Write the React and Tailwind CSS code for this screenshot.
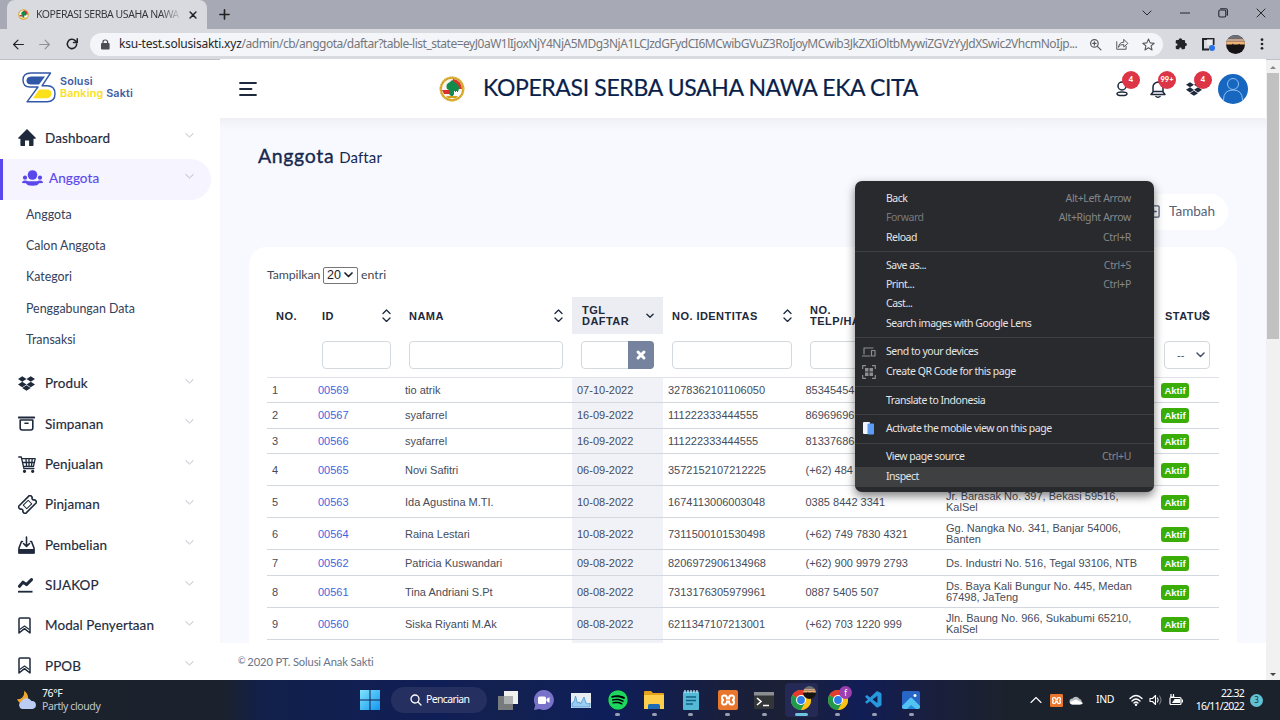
import React from "react";
import { FaDropbox, FaSpotify, FaXmark } from "react-icons/fa6";
import { BiSolidExtension } from "react-icons/bi";
import { VscVscode } from "react-icons/vsc";

const chromeFont = "font-['Noto_Sans','Open_Sans',sans-serif]";
const pageFont = "font-['Lato',sans-serif]";
const dataFont = "font-['Liberation_Sans',sans-serif]";

function Line({ d, className = "", w = 1.5, box = "0 0 24 24", children }) {
  return (
    <svg viewBox={box} className={"shrink-0 " + className} fill="none" stroke="currentColor" strokeWidth={w} strokeLinecap="round" strokeLinejoin="round">
      {d && <path d={d} />}
      {children}
    </svg>
  );
}

function Emblem({ className }) {
  return (
    <svg viewBox="0 0 26 26" className={"shrink-0 " + className}>
      <circle cx="13" cy="13" r="12.4" fill="#d2a21c" />
      <circle cx="13" cy="13" r="11.800" fill="none" stroke="#e9cf7c" strokeWidth="1" strokeDasharray="1.4 1.6" />
      <circle cx="13" cy="13" r="10.2" fill="#f6f4ec" />
      <path d="M14 3a10 10 0 0 1 9 10h-4L13 6z" fill="#d8322b" />
      <path d="M3 14h8v4H5z" fill="#d8322b" />
      <path d="M8 13q-2-5 3-7l2-2 2 2q5 2 5 6l-1 5h-3l-3 4-3-3v-4z" fill="#128a4c" />
      <path d="M15 18v-3h1v1h1v-1h1v1h1v-1h1v1h2v2l-3 2h-4z" fill="#fff" />
      <path d="M7 20h12l-2 2H9z" fill="#d2a21c" />
    </svg>
  );
}

function Sunset({ className }) {
  return (
    <svg viewBox="0 0 20 20" className={"shrink-0 rounded-full " + className}>
      <rect width="20" height="20" fill="#171314" />
      <rect width="20" height="4" fill="#6c7079" />
      <rect y="4" width="20" height="3" fill="#c8a48c" />
      <rect y="7" width="20" height="3" fill="#f0b376" />
      <path d="M6 10l1-1 1 1 4 .3 2-1 1 1z" fill="#171314" />
    </svg>
  );
}

function BrowserTop() {
  return (
    <>
      <div className={"h-[29px] shrink-0 bg-[#a7a9b5] flex items-end text-[#33353b] " + chromeFont}>
        <div className="ml-[7px] w-[200px] h-[29px] rounded-t-lg bg-[#d8dae0] flex items-center pl-[11px] pr-[9px]">
          <Emblem className="size-[11px]" />
          <span className="ml-[7px] w-[146px] overflow-hidden whitespace-nowrap text-[10.500px] tracking-[-0.45px] bg-gradient-to-r from-[#33353b] from-85% to-transparent bg-clip-text text-transparent">KOPERASI SERBA USAHA NAWA EKA CITA</span>
          <Line d="M5 5l14 14M19 5L5 19" w={3.6} className="size-[10px] ml-auto text-[#222]" />
        </div>
        <Line d="M12 2v20M2 12h20" w={3.6} className="size-[11px] ml-[12px] mb-[9px] text-[#222]" />
        <div className="ml-auto flex items-center h-[26px] gap-[28px] mr-[14px] mb-[3px] text-[#26282c]">
          <Line d="M1 3l4 4 4-4" w={1} box="0 0 10 10" className="size-[10px]" />
          <Line d="M0 5h10" w={1.2} box="0 0 10 10" className="size-[10px]" />
          <Line w={1.1} box="0 0 10 10" className="size-[10px]"><rect x=".8" y="2" width="7" height="7" rx="1.4" /><path d="M2.6 .8H8q1.4 0 1.4 1.4v5" /></Line>
          <Line d="M1 1l8 8M9 1l-8 8" w={1} box="0 0 10 10" className="size-[10px]" />
        </div>
      </div>
      <div className={"h-[31px] shrink-0 bg-[#d8dae0] border-b border-[#bfc1c8] flex items-center text-[#222] " + chromeFont}>
        <Line d="M21 12H4M11 4l-8 8 8 8" w={2.2} className="size-[13px] ml-[12px]" />
        <Line d="M3 12h17M13 4l8 8-8 8" w={2} className="size-[13px] ml-[13px] text-[#8e9096]" />
        <Line w={2.6} className="size-[14px] ml-[14px]"><path d="M20 12a8 8 0 1 1-2.4-5.8L20 8.6" /><path d="M21 3v6.4h-6.4" /></Line>
        <div className="ml-[11px] w-[1073px] shrink-0 h-[23px] rounded-full bg-[#f3f5f8] flex items-center pl-[11px] pr-[8px] whitespace-nowrap">
          <svg viewBox="0 0 9 11" className="w-[9px] h-[11px] shrink-0 text-[#4b4d52]"><rect y="4" width="8.6" height="6.6" rx="1" fill="currentColor" /><path d="M2 4.5V3q0-2 2.3-2t2.3 2v1.5" fill="none" stroke="currentColor" strokeWidth="1.2" /></svg>
          <span className="ml-[9px] text-[12px] tracking-[-0.49px] text-[#75777c]"><span className="text-[#25272b] tracking-[-0.22px]">ksu-test.solusisakti.xyz</span>/admin/cb/anggota/daftar?table-list_state=eyJ0aW1lIjoxNjY4NjA5MDg3NjA1LCJzdGFydCI6MCwibGVuZ3RoIjoyMCwib3JkZXIiOltbMywiZGVzYyJdXSwic2VhcmNoIjp...</span>
          <div className="ml-auto flex items-center gap-[13px] text-[#55575d]">
            <Line w={2.2} className="size-[13px]"><circle cx="10" cy="10" r="7" /><path d="M15 15l7 7M7 10h6M10 7v6" /></Line>
            <Line w={1.7} className="size-[14px]"><path d="M3 8v13h16v-5" /><path d="M6 17q1-8 9-8V4l7 7-7 6v-4q-6-1-9 4z" /></Line>
            <Line w={2} className="size-[13px]" d="M12 2l3 7 7.500.7-5.700 5 1.700 7.300-6.500-4-6.500 4 1.700-7.300-5.700-5L9 9z" />
          </div>
        </div>
        <BiSolidExtension className="size-[14px] shrink-0 ml-[11px] text-[#232428]" />
        <svg viewBox="0 0 13 13" className="size-[13px] shrink-0 ml-[14px]"><path d="M11.500 7V1H1v10.500h6" fill="none" stroke="#232428" strokeWidth="2" /><rect x="5" y="1" width="6" height="6" fill="#fff" opacity=".5" /><circle cx="10" cy="10" r="3" fill="#2b72e8" /></svg>
        <Sunset className="size-[19px] ml-[11px]" />
        <svg viewBox="0 0 4 14" className="w-[4px] h-[12px] shrink-0 ml-[15px]" fill="#232428"><circle cx="2" cy="2" r="1.600" /><circle cx="2" cy="7" r="1.600" /><circle cx="2" cy="12" r="1.600" /></svg>
      </div>
    </>
  );
}

const icons = {
  home: <svg viewBox="0 0 18 17" className="w-[18px] h-[17px]" fill="currentColor"><path d="M9 0l9 9-.6.8H15.500v6.400q0 .8-.8.800h-3.600v-5.500H7V17H3.200q-.8 0-.8-.8V9.800H.600L0 9z" /></svg>,
  users: <svg viewBox="0 0 21 16" className="w-[21px] h-[16px]" fill="currentColor"><circle cx="10.500" cy="5" r="4.800" /><circle cx="3" cy="7.700" r="2.100" /><circle cx="18" cy="7.700" r="2.100" /><path d="M0 13q0-2.600 3-2.600 2 0 3 .8h9q1-.8 3-.8 3 0 3 2.600l-4 .3q-1 2.500-6.500 2.500T4 13.300z" /></svg>,
  dropbox: <FaDropbox className="size-[17px]" />,
  archive: <Line box="0 0 17 15" w={1.600} className="w-[17px] h-[15px]"><path d="M.8 1.500h15.400" strokeWidth="2" /><path d="M2.200 4v8q0 2 2 2h8.600q2 0 2-2V4M3 4h11" /><path d="M7 7.200h3" /></Line>,
  cart: <Line box="0 0 18 17" w={1.300} className="w-[18px] h-[17px]"><path d="M.7 1h2.600l2.600 11.500h10M3.700 2.700h13.500l-1.700 7.600H5.500M4.500 6.500h12M8 3l.6 7M11 3v7M14.200 3l-.7 7" /><circle cx="6.500" cy="15.300" r="1" fill="currentColor" /><circle cx="14.700" cy="15.300" r="1" fill="currentColor" /></Line>,
  ticket: <Line box="0 0 19 19" w={1.600} className="size-[19px]"><g transform="rotate(-45 9.500 9.500)"><path d="M2 4.500h15q1 0 1 1v2.200a1.900 1.900 0 0 0 0 3.600v2.200q0 1-1 1H2q-1 0-1-1v-2.200a1.900 1.900 0 0 0 0-3.600V5.500q0-1 1-1z" /><rect x="6" y="7" width="7" height="5" strokeWidth="1" /></g></Line>,
  inbox: <svg viewBox="0 0 17 18" className="w-[17px] h-[18px]"><path d="M8.500 1v9M5.500 7.500l3 3 3-3M4.500 5.500h-1L1 12v5h15v-5l-2.500-6.500h-1" fill="none" stroke="currentColor" strokeWidth="1.600" strokeLinecap="round" strokeLinejoin="round" /><path d="M.5 13h16v4.500H.5z" fill="currentColor" /></svg>,
  chart: <svg viewBox="0 0 15 15" className="size-[15px]" fill="none" stroke="currentColor"><path d="M1.500 8.300l3.500-4.200 3.500 2.500 5-5" strokeWidth="3" strokeLinejoin="round" strokeLinecap="round" /><path d="M0 13.700h14.500" strokeWidth="1.800" /></svg>,
  mark: <Line box="0 0 13 17" w={1.500} className="w-[13px] h-[17px]"><path d="M1 2q0-1 1-1h9q1 0 1 1v14l-5.500-4.300L1 16z" /><path d="M2 12.200L6.500 9l4.500 3.200" strokeWidth="1.100" /></Line>,
};

function MenuRow({ icon, label, active }) {
  return (
    <div className={"flex items-center shrink-0 h-[40.35px] w-[211px] pb-[3px] " + (active ? "bg-[#f6f4fe] text-[#5a48ec] border-l-[3px] border-[#5a48ec] rounded-r-full pl-[19px]" : "text-[#1e293b] pl-[18px]")}>
      <span className="flex shrink-0 w-[27px]">{icons[icon]}</span>
      <span className="text-[13.500px] tracking-[0.08px] [-webkit-text-stroke:0.15px]">{label}</span>
      <Line d="M.8 2.500L4.500 6 8.200 2.500" box="0 0 9 9" w={1} className="size-[9px] ml-auto mr-[17px] mb-[4px] text-[#b4bac6]" />
    </div>
  );
}

function Sidebar() {
  return (
    <aside className="w-[220px] shrink-0 h-full overflow-hidden bg-white flex flex-col">
      <div className="h-[59px] shrink-0 flex items-center pl-[22px] pb-[4px]">
        <svg viewBox="0 0 34 31" className="w-[34px] h-[31px]" fill="none" strokeWidth="1.400">
          <path d="M28.500 1H9Q1 1 1 8q0 7 7 7h8L5 29.800h20q8 0 8-8t-8-8h-5z" stroke="#3157a8" strokeLinejoin="round" />
          <path d="M23 4.500H10Q4.500 4.500 4.500 8.500T9 12.500h8z" fill="#3157a8" />
          <path d="M17 17.500h8q4.500 0 4.500 4t-4.500 4.700H11z" fill="#fbe01b" />
        </svg>
        <div className="ml-[4px] font-['Inter',sans-serif] text-[10.800px] leading-[12px] font-semibold text-[#3f5ca5] tracking-[0.15px]">Solusi<br /><span className="text-[#fbe01b]">Banking</span> Sakti</div>
      </div>
      <MenuRow icon="home" label="Dashboard" />
      <MenuRow icon="users" label="Anggota" active />
      <div className="h-[165px] shrink-0 flex flex-col pl-[26px] text-[#33415c]">
        {["Anggota", "Calon Anggota", "Kategori", "Penggabungan Data", "Transaksi"].map((t) => (
          <div key={t} className="h-[31.200px] shrink-0 flex items-center text-[12.400px]">{t}</div>
        ))}
      </div>
      <MenuRow icon="dropbox" label="Produk" />
      <MenuRow icon="archive" label="Simpanan" />
      <MenuRow icon="cart" label="Penjualan" />
      <MenuRow icon="ticket" label="Pinjaman" />
      <MenuRow icon="inbox" label="Pembelian" />
      <MenuRow icon="chart" label="SIJAKOP" />
      <MenuRow icon="mark" label="Modal Penyertaan" />
      <MenuRow icon="mark" label="PPOB" />
    </aside>
  );
}

function Alert({ count, children }) {
  return (
    <div className="relative size-[18px] flex items-center justify-center text-[#1e293b]">
      {children}
      <span className="absolute left-[9px] top-[-9px] size-[18px] rounded-full bg-[#dc3545] text-white text-[7.500px] font-black flex items-center justify-center">{count}</span>
    </div>
  );
}

function Header() {
  return (
    <header className="h-[59px] shrink-0 bg-white flex items-center pr-[19px]">
      <Line box="0 0 18 14" w={1.800} className="w-[18px] h-[14px] ml-[19px] text-[#1e293b]"><path d="M1 1h16M1 7h11.500M1 13h16" /></Line>
      <Emblem className="size-[26px] ml-[182px]" />
      <h1 className="ml-[18px] pb-[2px] text-[23px] tracking-[-0.36px] text-[#0b1f4b] whitespace-nowrap [-webkit-text-stroke:0.2px]">KOPERASI SERBA USAHA NAWA EKA CITA</h1>
      <div className="ml-auto flex items-center gap-[18px] mr-[15px]">
        <Alert count="4"><Line box="0 0 12 17" w={1.500} className="w-[12px] h-[17px]"><circle cx="6" cy="6" r="4" /><ellipse cx="6" cy="13.800" rx="5" ry="1.800" /></Line></Alert>
        <Alert count="99+"><Line box="0 0 16 18" w={1.500} className="w-[16px] h-[18px]"><path d="M1 14.500h14L13 12V7q0-4-5-5-5 1-5 5v5zM3 11.500h10M6 16.500q2 1.500 4 0" /></Line></Alert>
        <Alert count="4"><FaDropbox className="size-[16px]" /></Alert>
      </div>
      <div className="size-[30px] rounded-full bg-[#1766c0] overflow-hidden flex -mr-px">
        <svg viewBox="0 0 30 30" className="size-[30px]" fill="none" stroke="#8fc1f0" strokeWidth="1"><circle cx="15" cy="10" r="5.500" /><path d="M5.500 26q0-10 9.500-10t9.500 10" /></svg>
      </div>
    </header>
  );
}

const cols = "grid grid-cols-[46px_87px_172px_91px_138px_140px_215px_63px]";
const people = [
  ["h-[25px]", "1", "00569", "tio atrik", "07-10-2022", "3278362101106050", "853454545", ""],
  ["h-[26px]", "2", "00567", "syafarrel", "16-09-2022", "111222333444555", "869696969", ""],
  ["h-[25px]", "3", "00566", "syafarrel", "16-09-2022", "111222333444555", "813376868", ""],
  ["h-[32px] pt-px", "4", "00565", "Novi Safitri", "06-09-2022", "3572152107212225", "(+62) 484", ""],
  ["h-[32px] pt-px", "5", "00563", "Ida Agustina M.TI.", "10-08-2022", "1674113006003048", "0385 8442 3341", "Jr. Barasak No. 397, Bekasi 59516, KalSel"],
  ["h-[32px] pt-px", "6", "00564", "Raina Lestari", "10-08-2022", "7311500101530498", "(+62) 749 7830 4321", "Gg. Nangka No. 341, Banjar 54006, Banten"],
  ["h-[26px] pt-px", "7", "00562", "Patricia Kuswandari", "09-08-2022", "8206972906134968", "(+62) 900 9979 2793", "Ds. Industri No. 516, Tegal 93106, NTB"],
  ["h-[32px] pt-px", "8", "00561", "Tina Andriani S.Pt", "08-08-2022", "7313176305979961", "0887 5405 507", "Ds. Baya Kali Bungur No. 445, Medan 67498, JaTeng"],
  ["h-[32px] pt-px", "9", "00560", "Siska Riyanti M.Ak", "08-08-2022", "6211347107213001", "(+62) 703 1220 999", "Jln. Baung No. 966, Sukabumi 65210, KalSel"],
];

function Sort() {
  return <Line d="M1 4.500L4.500 1 8 4.500M1 9L4.500 12.500 8 9" box="0 0 9 13" w={1.300} className="w-[9px] h-[13px] ml-auto mb-[2px]" />;
}

function Field() {
  return <div className="h-[28px] mx-[9px] rounded border border-[#d4d9de] bg-white" />;
}

function Th({ children, tone = "" }) {
  return <div className={"h-[37px] flex items-center px-[9px] pt-[1px] " + tone}>{children}</div>;
}

function Table() {
  return (
    <div className={"flex flex-col text-[11px] leading-[11px] " + dataFont}>
      <div className={cols + " h-[37px] shrink-0 font-bold tracking-[0.45px] text-[#1e293b]"}>
        <Th>NO.</Th>
        <Th>ID<Sort /></Th>
        <Th>NAMA<Sort /></Th>
        <Th tone="bg-[#ebedf2] pl-[10px]"><span>TGL<br />DAFTAR</span><Line d="M1 1L4.500 4.500 8 1" box="0 0 9 6" w={1.500} className="w-[8px] h-[6px] ml-auto" /></Th>
        <Th><span className="whitespace-nowrap">NO. IDENTITAS</span><Sort /></Th>
        <Th><span>NO.<br />TELP/HANDPHONE</span></Th>
        <Th>ALAMAT</Th>
        <Th><span className="w-[37px]">STATUS</span><Line d="M1 4.500L4.500 1 8 4.500M1 8L4.500 11.500 8 8" box="0 0 9 13" w={1.300} className="w-[8px] h-[13px] ml-auto mb-[2px]" /></Th>
      </div>
      <div className={cols + " h-[44px] shrink-0 pt-[7px] border-b border-[#dfe2e8]"}>
        <span />
        <Field /><Field />
        <div className="h-[28px] mx-[9px] rounded border border-[#d4d9de] bg-white flex justify-end">
          <div className="w-[26px] h-[28px] -mt-px -mr-px rounded-r bg-[#75839e] flex items-center justify-center text-white"><FaXmark className="size-[12px] [stroke-width:60] stroke-white" /></div>
        </div>
        <Field /><Field /><Field />
        <div className="h-[28px] mx-[8px] w-[46px] rounded border border-[#d4d9de] bg-white flex items-center pl-[12px] text-[#49546a]">--<Line d="M1 1L4.500 4.500 8 1" box="0 0 9 6" w={1.500} className="w-[9px] h-[6px] ml-auto mr-[4px]" /></div>
      </div>
      {people.map((p) => (
        <div key={p[1]} className={cols + " shrink-0 text-[#464c5a] border-b border-[#d3d8e0] bg-[linear-gradient(90deg,transparent_305px,#f1f2f7_305px,#f1f2f7_396px,transparent_396px)] " + p[0]}>
          <div className="flex items-center pl-[5px]">{p[1]}</div>
          <div className="flex items-center pl-[5px] text-[#3f63e0]">{p[2]}</div>
          <div className="flex items-center pl-[5px]">{p[3]}</div>
          <div className="flex items-center pl-[5px]">{p[4]}</div>
          <div className="flex items-center pl-[5px]">{p[5]}</div>
          <div className="flex items-center pl-[4.500px]">{p[6]}</div>
          <div className="flex items-center pl-[5px] pr-[14px]">{p[7]}</div>
          <div className="flex items-center pl-[5px]"><span className="w-[28px] h-[15px] rounded-[3px] bg-[#3aae07] text-white font-bold text-[9.500px] flex items-center justify-center">Aktif</span></div>
        </div>
      ))}
      <div className={cols + " h-[10px] shrink-0"}><span /><span /><span /><span className="bg-[#f1f2f7]" /></div>
    </div>
  );
}

function Content() {
  return (
    <main className="h-[525px] shrink-0 overflow-hidden bg-[#f8f9fe] flex flex-col">
      <div className="h-[12px] shrink-0 bg-gradient-to-b from-[#eff0f5] to-[#f8f9fe]" />
      <div className="h-[52px] shrink-0 pl-[38px] flex items-center gap-[5px] text-[#16284f]"><span className="text-[19.500px] tracking-[0.65px] [-webkit-text-stroke:0.35px]">Anggota</span><span className="text-[15px] tracking-[0.1px] pt-[3px]">Daftar</span></div>
      <div className="h-[65px] shrink-0 flex justify-end items-start pr-[38px] pt-[12px]">
        <div className="w-[98px] h-[36px] rounded-full bg-white flex items-center pl-[17px] pb-[2px] text-[#56617a]">
          <Line box="0 0 14 14" w={1.400} className="size-[13px]"><rect x="1" y="1" width="12" height="12" rx="1" /><path d="M7 4v6M4 7h6" /></Line>
          <span className="ml-[9px] text-[13.500px]">Tambah</span>
        </div>
      </div>
      <section className="mx-[29px] h-[500px] shrink-0 rounded-t-[18px] bg-white px-[18px]">
        <div className="h-[50px] pt-[6px] flex items-center gap-[3px] text-[12.300px] text-[#434a58]"><span className="w-[53px] tracking-[-0.100px]">Tampilkan</span>
          <span className={"w-[35px] h-[17px] rounded-[2px] border border-[#767676] flex items-center pl-[3px] text-[12.500px] text-[#222] " + dataFont}>20<Line d="M1 1L4.500 4.500 8 1" box="0 0 9 6" w={1.700} className="w-[9px] h-[6px] ml-auto mr-[4px]" /></span>
          entri
        </div>
        <Table />
      </section>
    </main>
  );
}

function Item({ label, keys, icon, tone = "text-[#e4e5e7]", h = "h-[19.5px]" }) {
  return (
    <div className={"flex items-center shrink-0 pr-[23px] " + h + " " + tone}>
      <span className="w-[31px] shrink-0 pl-[7px] flex">{icon}</span>
      <span className="whitespace-nowrap">{label}</span>
      <span className="ml-auto text-[#85878b] whitespace-nowrap tracking-[-0.35px]">{keys}</span>
    </div>
  );
}

function Rule({ h = "h-[9px]" }) {
  return <div className={"shrink-0 flex items-center " + h}><div className="h-px w-full bg-[#3d3f43]" /></div>;
}

function ContextMenu() {
  return (
    <div className={"absolute left-[855px] top-[181px] w-[299px] h-[311px] rounded-[7px] bg-[#292a2d] shadow-[0_4px_10px_rgba(0,0,0,0.5)] pt-[8px] flex flex-col text-[10.500px] tracking-[-0.480px] overflow-hidden " + chromeFont}>
      <Item label="Back" keys="Alt+Left Arrow" />
      <Item label="Forward" keys="Alt+Right Arrow" tone="text-[#77797d]" />
      <Item label="Reload" keys="Ctrl+R" />
      <Rule h="h-[8.500px]" />
      <Item label="Save as..." keys="Ctrl+S" />
      <Item label="Print..." keys="Ctrl+P" h="h-[19px]" />
      <Item label="Cast..." />
      <Item label="Search images with Google Lens" h="h-[19px]" />
      <Rule h="h-[8.500px]" />
      <Item label="Send to your devices" h="h-[20px]" icon={<Line box="0 0 14 10" w={1.200} className="w-[14px] h-[10px] text-[#8b8d91]"><path d="M2 7V1h9M.5 9H8" /><rect x="9.500" y="3.500" width="3.500" height="5.500" /></Line>} />
      <Item label="Create QR Code for this page" h="h-[20px]" icon={<svg viewBox="0 0 14 14" className="size-[14px] text-[#8b8d91]"><path d="M.7 4V.7H4M10 .7h3.300V4M13.300 10v3.300H10M4 13.300H.7V10" fill="none" stroke="currentColor" strokeWidth="1.200" /><path d="M3 3h3.500v3.500H3zM7.500 3H11v3.500H7.500zM3 7.500h3.500V11H3zM7.500 7.500H11V11H7.500z" fill="currentColor" /></svg>} />
      <Rule />
      <Item label="Translate to Indonesia" h="h-[20px]" />
      <Rule h="h-[8px]" />
      <Item label="Activate the mobile view on this page" h="h-[20px]" icon={<svg viewBox="0 0 12 13" className="w-[12px] h-[13px] ml-[1px]"><rect width="7" height="12" rx="1" fill="#f1f5fb" /><rect x="4.500" y="1.500" width="6.500" height="11" rx="1" fill="#5c9cf5" /></svg>} />
      <Rule />
      <Item label="View page source" keys="Ctrl+U" h="h-[19.500px]" />
      <Item label="Inspect" h="h-[19.500px]" tone="bg-[#3f4042] text-[#e4e5e7]" />
    </div>
  );
}

function ChromeLogo() {
  return (
    <svg viewBox="0 0 20 20" className="size-[20px]">
      <circle cx="10" cy="10" r="10" fill="#fbc116" />
      <path d="M10 10L1.340 5A10 10 0 0 1 18.660 5z" fill="#e33b2e" />
      <path d="M10 10L1.340 5A10 10 0 0 0 10 20l4.300-7.500z" fill="#229a4b" />
      <path d="M10 5h8.660A10 10 0 0 1 10 20l4.300-7.500z" fill="#fbc116" />
      <circle cx="10" cy="10" r="5" fill="#fff" /><circle cx="10" cy="10" r="3.900" fill="#2f7de9" />
    </svg>
  );
}

function Xampp({ className }) {
  return (
    <svg viewBox="0 0 20 20" className={className}><rect width="20" height="20" rx="2" fill="#e8762d" /><path d="M7 5.500Q4 5 4 8q0 2 2 2-2 0-2 2.500 0 2.500 3 2 2-.500 2-3h2q0 2.500 2 3 3 .500 3-2Q16 10 14 10q2 0 2-2 0-3-3-2.500-2 .500-2 3H9q0-2.500-2-3z" fill="none" stroke="#fff" strokeWidth="2" /></svg>
  );
}

function TaskIcon({ children, dot, active }) {
  return (
    <div className={"relative w-[33px] h-[34px] flex items-center justify-center rounded " + (active ? "bg-[#242a55]" : "")}>
      {children}
      {dot && <span className="absolute bottom-[1px] left-[14px] w-[5px] h-[3px] rounded-full bg-[#9a9eb0]" />}
      {active && <span className="absolute bottom-[1px] left-[10px] w-[13px] h-[3px] rounded-full bg-[#6cc4de]" />}
    </div>
  );
}

function Taskbar() {
  return (
    <footer className={"h-[40px] shrink-0 flex items-center text-white bg-[linear-gradient(90deg,#1c222b_0px,#1b222e_225px,#12204a_260px,#101e57_440px,#132150_500px,#0e1e5a_610px,#191f3b_730px,#1b2036_790px,#111d56_860px,#191f3d_930px,#1c222c_1010px,#1c222c_1280px)] " + chromeFont}>
      <div className="ml-[16px] w-[344px] shrink-0 flex items-center">
        <svg viewBox="0 0 21 19" className="w-[21px] h-[19px]"><path d="M8 0q1 5-3 7.500-2 1-4 .5 2 5 7 4.500 5-2 4-7Q11 1 8 0z" fill="#f4a52b" /><path d="M6 18a4 4 0 0 1-.3-7.600 5.500 5.500 0 0 1 9.800-.4 4 4 0 0 1 .8 8z" fill="#bccdf3" /></svg>
        <div className="ml-[5px] text-[10.500px] leading-[13px] tracking-[-0.400px]"><div>76°F</div><div className="text-[#c3c6cc]">Partly cloudy</div></div>
      </div>
      <svg viewBox="0 0 20 20" className="size-[20px]"><defs><linearGradient id="win" x2="1" y2="1"><stop stopColor="#7fe3fb" /><stop offset="1" stopColor="#1396ef" /></linearGradient></defs><path d="M0 0h9.500v9.500H0zM10.500 0H20v9.500h-9.500zM0 10.500h9.500V20H0zM10.500 10.500H20V20h-9.500z" fill="url(#win)" /></svg>
      <div className="ml-[11px] w-[96px] h-[26px] rounded-full bg-[#252f60] flex items-center pl-[19px] text-[10.500px]"><Line w={2.600} className="size-[12px]"><circle cx="10" cy="10" r="8" /><path d="M16 16l6 6" /></Line><span className="ml-[4px] tracking-[-0.65px]">Pencarian</span></div>
      <div className="ml-[4px] flex gap-[3.700px]">
        <TaskIcon><svg viewBox="0 0 20 19" className="w-[20px] h-[19px]"><rect x="6" width="14" height="13" fill="#f0f0ee" /><rect y="5" width="15" height="14" fill="#777b7d" /><rect x="6" y="5" width="9" height="8" fill="#aeb1b2" /></svg></TaskIcon>
        <TaskIcon><svg viewBox="0 0 20 20" className="size-[20px]"><path d="M10 0a10 10 0 1 1-4.500 19L0 20l1.300-5A10 10 0 0 1 10 0z" fill="#7873c9" /><rect x="4" y="6.500" width="8" height="7.500" rx="1.500" fill="#fff" /><path d="M12.500 9l3-2v6l-3-2z" fill="#fff" /></svg></TaskIcon>
        <TaskIcon><svg viewBox="0 0 20 15" className="w-[20px] h-[15px]"><rect width="20" height="15" fill="#e8edf2" /><path d="M1 14V10l2-1 1.500-6 2 7 2-1 1 2 2-4 1.500-3 2 6 2 1 2-1v4z" fill="#9ccdf0" stroke="#3f98d4" strokeWidth=".8" /></svg></TaskIcon>
        <TaskIcon dot><span className="rounded-full bg-black"><FaSpotify className="size-[20px] text-[#1ed760]" /></span></TaskIcon>
        <TaskIcon dot><svg viewBox="0 0 20 18" className="w-[20px] h-[18px]"><path d="M0 1q0-1 1-1h6l2 2h10q1 0 1 1v15H0z" fill="#e3a21a" /><path d="M0 4h20v14H0z" fill="#fbce4c" /><path d="M4 18v-3.500q0-1.500 1.500-1.500h9q1.500 0 1.500 1.500V18z" fill="#1b6cb8" /></svg></TaskIcon>
        <TaskIcon dot><svg viewBox="0 0 16 20" className="w-[16px] h-[20px]"><rect y="1.500" width="16" height="18.500" rx="1" fill="#54b9d6" /><path d="M2 0v3M5 0v3M8 0v3M11 0v3M14 0v3" stroke="#d9f1f8" strokeWidth="1.200" /><path d="M3 7h10M3 10.500h10M3 14h7" stroke="#145e80" strokeWidth="1.300" /></svg></TaskIcon>
        <TaskIcon dot><Xampp className="size-[20px]" /></TaskIcon>
        <TaskIcon dot><svg viewBox="0 0 20 17" className="w-[20px] h-[17px]"><rect width="20" height="17" rx="1" fill="#333639" /><rect width="20" height="3.500" fill="#8b8e91" /><path d="M3 6l4 3.500L3 13M9 13.500h6" fill="none" stroke="#fff" strokeWidth="1.600" /></svg></TaskIcon>
        <TaskIcon active><ChromeLogo /><Sunset className="absolute left-[18px] top-[3px] size-[13px]" /></TaskIcon>
        <TaskIcon dot><ChromeLogo /><span className="absolute left-[18px] top-[3px] size-[13px] rounded-full bg-[#9c3fb0] text-[8px] flex items-center justify-center">f</span></TaskIcon>
        <TaskIcon dot><VscVscode className="size-[20px] text-[#2798dc]" /></TaskIcon>
        <TaskIcon dot><svg viewBox="0 0 18 18" className="size-[18px]"><rect width="18" height="18" rx="2" fill="#2766c7" /><path d="M0 15l8-8q1-1 2 0l8 8v1q0 2-2 2H2q-2 0-2-2z" fill="#51c4f4" /><path d="M5 18l4-4 5 4z" fill="#248ad9" /><circle cx="13" cy="4.500" r="1.500" fill="#fff" /></svg></TaskIcon>
      </div>
      <div className="ml-auto mr-[17px] flex items-center text-[10.500px]">
        <Line d="M1 6.500L6 1.500l5 5" box="0 0 12 8" w={1.100} className="w-[12px] h-[8px]" />
        <Xampp className="size-[13px] ml-[8px]" />
        <svg viewBox="0 0 14 10" className="w-[14px] h-[10px] ml-[6px]"><path d="M3.500 9.500a3 3 0 0 1 0-6 4 4 0 0 1 7 .5 2.900 2.900 0 0 1 .5 5.500z" fill="#b9bcc0" /><path d="M1 7l6-2.500L14 8q-1 1.500-3 1.500H3.500Q1.500 9.500 1 7z" fill="#fff" /></svg>
        <span className="ml-[13px] w-[17px] tracking-[-0.400px]">IND</span>
        <Line box="0 0 14 12" w={1.300} className="w-[14px] h-[12px] ml-[16px]"><path d="M1 4.500q6-6 12 0M3 7q4-4 8 0M5 9q2-2 4 0" /><circle cx="7" cy="10.700" r=".6" /></Line>
        <Line box="0 0 14 12" w={1.100} className="w-[14px] h-[12px] ml-[6px]"><path d="M1 4.500h2.500L6.500 1.500v9L3.500 7.500H1zM8.500 4q1.500 2 0 4" /><path d="M10.500 2q3 4 0 8" opacity=".4" /></Line>
        <svg viewBox="0 0 14 12" className="w-[14px] h-[12px] ml-[6px]" fill="none" stroke="#fff" strokeWidth="1.200"><rect x="1" y="3.500" width="11" height="7" rx="1" /><path d="M6 5.500h4.500v3H4zM13.400 5.500v3" fill="#fff" /><path d="M2 0v3M4.500 0v3M1 3h4.500" /></svg>
        <div className="ml-[13px] w-[48px] flex flex-col items-end leading-[13px] tracking-[-0.750px] whitespace-nowrap"><div>22.32</div><div>16/11/2022</div></div>
        <span className="ml-[6px] size-[13px] rounded-full bg-[#62c2d4] text-[#12303a] text-[8px] flex items-center justify-center">3</span>
      </div>
    </footer>
  );
}

export default function App() {
  return (
    <div className="relative w-[1280px] h-[720px] overflow-hidden flex flex-col bg-white">
      <BrowserTop />
      <div className={"h-[621px] shrink-0 flex -mt-px pt-px " + pageFont}>
        <Sidebar />
        <div className="w-[1046px] shrink-0 flex flex-col -mt-px">
          <Header />
          <Content />
          <div className="h-[37px] shrink-0 pl-[18px] pt-[2px] flex items-center text-[11.200px] tracking-[-0.14px] text-[#697388]"><span className="text-[9px] -mt-[3px] mr-[2px]">©</span>2020 PT. Solusi Anak Sakti</div>
        </div>
        <div className="w-[14px] shrink-0 bg-[#f1f1f1] flex flex-col items-center pt-[6px] pb-[4px]">
          <svg viewBox="0 0 6 3" className="w-[6px] h-[3px] shrink-0"><path d="M3 0l3 3H0z" fill="#888" /></svg>
          <div className="mt-[4px] w-[12px] h-[266px] bg-[#c1c1c1]" />
          <svg viewBox="0 0 6 3" className="w-[6px] h-[3px] mt-auto shrink-0"><path d="M3 3l3-3H0z" fill="#444" /></svg>
        </div>
      </div>
      <ContextMenu />
      <Taskbar />
    </div>
  );
}
